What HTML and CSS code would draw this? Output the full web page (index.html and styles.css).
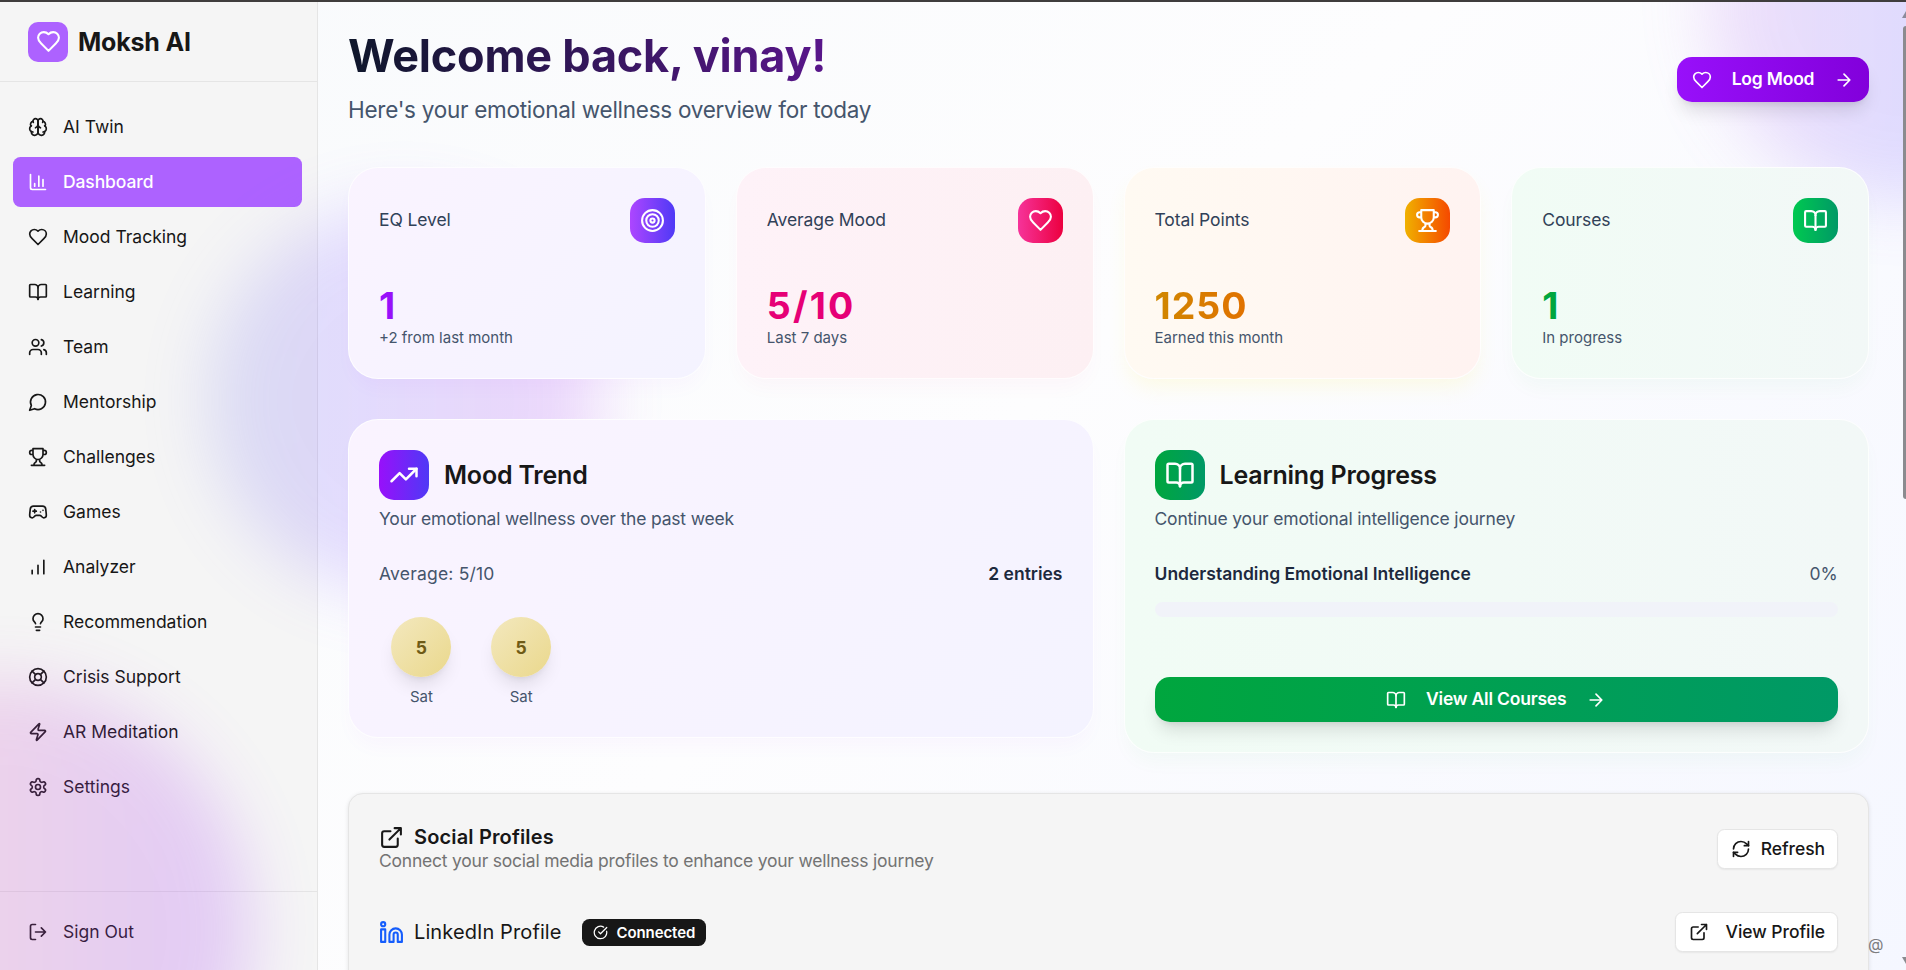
FILE: index.html
```html
<!DOCTYPE html>
<html lang="en">
<head>
  <meta charset="UTF-8" />
  <meta name="viewport" content="width=device-width, initial-scale=1.0"/>
  <title>Moksh AI</title>
  <link rel="stylesheet" href="styles.css">
</head>
<body>
  <!-- icon set -->
  <svg class="sprite" xmlns="http://www.w3.org/2000/svg">
    <symbol id="heart" viewBox="0 0 24 24"><path d="M19 14c1.49-1.46 3-3.21 3-5.5A5.5 5.5 0 0 0 16.5 3c-1.76 0-3 .5-4.5 2-1.5-1.5-2.74-2-4.5-2A5.5 5.5 0 0 0 2 8.5c0 2.3 1.5 4.05 3 5.5l7 7Z"/></symbol>
    <symbol id="brain" viewBox="0 0 24 24"><path d="M12 5a3 3 0 1 0-5.997.125 4 4 0 0 0-2.526 5.77 4 4 0 0 0 .556 6.588A4 4 0 1 0 12 18Z"/><path d="M12 5a3 3 0 1 1 5.997.125 4 4 0 0 1 2.526 5.77 4 4 0 0 1-.556 6.588A4 4 0 1 1 12 18Z"/><path d="M15 13a4.5 4.5 0 0 1-3-4 4.5 4.5 0 0 1-3 4"/><path d="M17.599 6.5a3 3 0 0 0 .399-1.375M6.003 5.125A3 3 0 0 0 6.401 6.5M3.477 10.896a4 4 0 0 1 .585-.396M19.938 10.5a4 4 0 0 1 .585.396M6 18a4 4 0 0 1-1.967-.516M19.967 17.484A4 4 0 0 1 18 18"/></symbol>
    <symbol id="chart" viewBox="0 0 24 24"><path d="M3 3v16a2 2 0 0 0 2 2h16M18 17V9M13 17V5M8 17v-3"/></symbol>
    <symbol id="book" viewBox="0 0 24 24"><path d="M12 7v14"/><path d="M3 18a1 1 0 0 1-1-1V4a1 1 0 0 1 1-1h5a4 4 0 0 1 4 4 4 4 0 0 1 4-4h5a1 1 0 0 1 1 1v13a1 1 0 0 1-1 1h-6a3 3 0 0 0-3 3 3 3 0 0 0-3-3z"/></symbol>
    <symbol id="users" viewBox="0 0 24 24"><path d="M16 21v-2a4 4 0 0 0-4-4H6a4 4 0 0 0-4 4v2M22 21v-2a4 4 0 0 0-3-3.87M16 3.13a4 4 0 0 1 0 7.75"/><circle cx="9" cy="7" r="4"/></symbol>
    <symbol id="message" viewBox="0 0 24 24"><path d="M7.9 20A9 9 0 1 0 4 16.1L2 22Z"/></symbol>
    <symbol id="trophy" viewBox="0 0 24 24"><path d="M6 9H4.5a2.5 2.5 0 0 1 0-5H6M18 9h1.5a2.5 2.5 0 0 0 0-5H18M4 22h16M10 14.66V17c0 .55-.47.98-.97 1.21C7.85 18.75 7 20.24 7 22M14 14.66V17c0 .55.47.98.97 1.21C16.15 18.75 17 20.24 17 22M18 2H6v7a6 6 0 0 0 12 0V2Z"/></symbol>
    <symbol id="gamepad" viewBox="0 0 24 24"><path d="M6 11h4M8 9v4M15 12h.01M18 10h.01"/><path d="M17.32 5H6.68a4 4 0 0 0-3.978 3.59c-.006.052-.01.101-.017.152C2.604 9.416 2 14.456 2 16a3 3 0 0 0 3 3c1 0 1.5-.5 2-1l1.414-1.414A2 2 0 0 1 9.828 16h4.344a2 2 0 0 1 1.414.586L17 18c.5.5 1 1 2 1a3 3 0 0 0 3-3c0-1.545-.604-6.584-.685-7.258-.007-.05-.011-.1-.017-.151A4 4 0 0 0 17.32 5z"/></symbol>
    <symbol id="bars" viewBox="0 0 24 24"><path d="M12 20V10M19 20V4M5 20v-4"/></symbol>
    <symbol id="bulb" viewBox="0 0 24 24"><path d="M15 14c.2-1 .7-1.7 1.5-2.5 1-.9 1.5-2.2 1.5-3.5A6 6 0 0 0 6 8c0 1 .2 2.2 1.5 3.5.7.7 1.3 1.5 1.5 2.5M9 18h6M10 22h4"/></symbol>
    <symbol id="buoy" viewBox="0 0 24 24"><circle cx="12" cy="12" r="10"/><path d="m4.93 4.93 4.24 4.24M14.83 9.17l4.24-4.24M14.83 14.83l4.24 4.24M9.17 14.83l-4.24 4.24"/><circle cx="12" cy="12" r="4"/></symbol>
    <symbol id="zap" viewBox="0 0 24 24"><path d="M4 14a1 1 0 0 1-.78-1.63l9.9-10.2a.5.5 0 0 1 .86.46l-1.92 6.02A1 1 0 0 0 13 10h7a1 1 0 0 1 .78 1.63l-9.9 10.2a.5.5 0 0 1-.86-.46l1.92-6.02A1 1 0 0 0 11 14z"/></symbol>
    <symbol id="gear" viewBox="0 0 24 24"><path d="M12.22 2h-.44a2 2 0 0 0-2 2v.18a2 2 0 0 1-1 1.73l-.43.25a2 2 0 0 1-2 0l-.15-.08a2 2 0 0 0-2.73.73l-.22.38a2 2 0 0 0 .73 2.73l.15.1a2 2 0 0 1 1 1.72v.51a2 2 0 0 1-1 1.74l-.15.09a2 2 0 0 0-.73 2.73l.22.38a2 2 0 0 0 2.73.73l.15-.08a2 2 0 0 1 2 0l.43.25a2 2 0 0 1 1 1.73V20a2 2 0 0 0 2 2h.44a2 2 0 0 0 2-2v-.18a2 2 0 0 1 1-1.73l.43-.25a2 2 0 0 1 2 0l.15.08a2 2 0 0 0 2.73-.73l.22-.39a2 2 0 0 0-.73-2.73l-.15-.08a2 2 0 0 1-1-1.74v-.5a2 2 0 0 1 1-1.74l.15-.09a2 2 0 0 0 .73-2.73l-.22-.38a2 2 0 0 0-2.73-.73l-.15.08a2 2 0 0 1-2 0l-.43-.25a2 2 0 0 1-1-1.73V4a2 2 0 0 0-2-2z"/><circle cx="12" cy="12" r="3"/></symbol>
    <symbol id="logout" viewBox="0 0 24 24"><path d="m16 17 5-5-5-5M21 12H9M9 21H5a2 2 0 0 1-2-2V5a2 2 0 0 1 2-2h4"/></symbol>
    <symbol id="arrow" viewBox="0 0 24 24"><path d="M5 12h14M12 5l7 7-7 7"/></symbol>
    <symbol id="target" viewBox="0 0 24 24"><circle cx="12" cy="12" r="10"/><circle cx="12" cy="12" r="6"/><circle cx="12" cy="12" r="2"/></symbol>
    <symbol id="trend" viewBox="0 0 24 24"><path d="M16 7h6v6"/><path d="m22 7-8.500 8.500-5-5L2 17"/></symbol>
    <symbol id="external" viewBox="0 0 24 24"><path d="M15 3h6v6M10 14 21 3M18 13v6a2 2 0 0 1-2 2H5a2 2 0 0 1-2-2V8a2 2 0 0 1 2-2h6"/></symbol>
    <symbol id="refresh" viewBox="0 0 24 24"><path d="M3 12a9 9 0 0 1 9-9 9.750 9.750 0 0 1 6.740 2.740L21 8"/><path d="M21 3v5h-5M21 12a9 9 0 0 1-9 9 9.750 9.750 0 0 1-6.740-2.740L3 16"/><path d="M8 16H3v5"/></symbol>
    <symbol id="linkedin" viewBox="0 0 24 24"><path d="M16 8a6 6 0 0 1 6 6v7h-4v-7a2 2 0 0 0-4 0v7h-4v-7a6 6 0 0 1 6-6z"/><rect width="4" height="12" x="2" y="9"/><circle cx="4" cy="4" r="2"/></symbol>
    <symbol id="check" viewBox="0 0 24 24"><path d="M21.801 10A10 10 0 1 1 17 3.335"/><path d="m9 11 3 3L22 4"/></symbol>
  </svg>

  <aside class="sidebar">
    <div class="brand">
      <div class="brand-logo"><svg class="icon lg"><use href="#heart"/></svg></div>
      <span class="brand-name">Moksh AI</span>
    </div>
    <nav class="nav">
      <a class="nav-item"><svg class="icon"><use href="#brain"/></svg><span>AI Twin</span></a>
      <a class="nav-item active"><svg class="icon"><use href="#chart"/></svg><span>Dashboard</span></a>
      <a class="nav-item"><svg class="icon"><use href="#heart"/></svg><span>Mood Tracking</span></a>
      <a class="nav-item"><svg class="icon"><use href="#book"/></svg><span>Learning</span></a>
      <a class="nav-item"><svg class="icon"><use href="#users"/></svg><span>Team</span></a>
      <a class="nav-item"><svg class="icon"><use href="#message"/></svg><span>Mentorship</span></a>
      <a class="nav-item"><svg class="icon"><use href="#trophy"/></svg><span>Challenges</span></a>
      <a class="nav-item"><svg class="icon"><use href="#gamepad"/></svg><span>Games</span></a>
      <a class="nav-item"><svg class="icon"><use href="#bars"/></svg><span>Analyzer</span></a>
      <a class="nav-item"><svg class="icon"><use href="#bulb"/></svg><span>Recommendation</span></a>
      <a class="nav-item"><svg class="icon"><use href="#buoy"/></svg><span>Crisis Support</span></a>
      <a class="nav-item"><svg class="icon"><use href="#zap"/></svg><span>AR Meditation</span></a>
      <a class="nav-item"><svg class="icon"><use href="#gear"/></svg><span>Settings</span></a>
    </nav>
    <div class="sidebar-footer">
      <a class="nav-item"><svg class="icon"><use href="#logout"/></svg><span>Sign Out</span></a>
    </div>
  </aside>

  <div class="blobs">
    <div class="blob blob-top"></div>
    <div class="blob blob-mid"></div>
    <div class="blob blob-bottom"></div>
  </div>

  <main class="main">
    <header class="welcome">
      <div>
        <h1><span>Welcome back, vinay!</span></h1>
        <p>Here's your emotional wellness overview for today</p>
      </div>
      <button class="btn btn-purple"><svg class="icon"><use href="#heart"/></svg><span>Log Mood</span><svg class="icon"><use href="#arrow"/></svg></button>
    </header>

    <section class="stats">
      <div class="card stat purple">
        <div class="stat-top"><span class="label">EQ Level</span><div class="tile"><svg class="icon lg"><use href="#target"/></svg></div></div>
        <div><span class="value">1</span></div>
        <div class="note">+2 from last month</div>
      </div>
      <div class="card stat pink">
        <div class="stat-top"><span class="label">Average Mood</span><div class="tile"><svg class="icon lg"><use href="#heart"/></svg></div></div>
        <div><span class="value">5/10</span></div>
        <div class="note">Last 7 days</div>
      </div>
      <div class="card stat orange">
        <div class="stat-top"><span class="label">Total Points</span><div class="tile"><svg class="icon lg"><use href="#trophy"/></svg></div></div>
        <div><span class="value">1250</span></div>
        <div class="note">Earned this month</div>
      </div>
      <div class="card stat green">
        <div class="stat-top"><span class="label">Courses</span><div class="tile"><svg class="icon lg"><use href="#book"/></svg></div></div>
        <div><span class="value">1</span></div>
        <div class="note">In progress</div>
      </div>
    </section>

    <section class="panels">
      <div class="card panel purple">
        <div class="panel-title"><div class="tile big"><svg class="icon xl"><use href="#trend"/></svg></div><h2>Mood Trend</h2></div>
        <p class="panel-desc">Your emotional wellness over the past week</p>
        <div class="row"><span class="muted">Average: 5/10</span><span class="strong">2 entries</span></div>
        <div class="week">
          <div class="day"><div class="score">5</div><span class="day-name">Sat</span></div>
          <div class="day"><div class="score">5</div><span class="day-name">Sat</span></div>
        </div>
      </div>
      <div class="card panel green">
        <div class="panel-title"><div class="tile big"><svg class="icon xl"><use href="#book"/></svg></div><h2>Learning Progress</h2></div>
        <p class="panel-desc">Continue your emotional intelligence journey</p>
        <div class="row"><span class="strong">Understanding Emotional Intelligence</span><span class="muted">0%</span></div>
        <div class="progress"></div>
        <button class="btn btn-green"><svg class="icon"><use href="#book"/></svg><span>View All Courses</span><svg class="icon"><use href="#arrow"/></svg></button>
      </div>
    </section>

    <section class="social">
      <div class="social-row">
        <div>
          <h3><svg class="icon lg"><use href="#external"/></svg>Social Profiles</h3>
          <p class="social-desc">Connect your social media profiles to enhance your wellness journey</p>
        </div>
        <button class="btn-outline"><svg class="icon"><use href="#refresh"/></svg><span>Refresh</span></button>
      </div>
      <div class="social-row profile">
        <div class="profile-name">
          <svg class="icon lg linkedin"><use href="#linkedin"/></svg>
          <span>LinkedIn Profile</span>
          <span class="badge"><svg class="icon sm"><use href="#check"/></svg>Connected</span>
        </div>
        <button class="btn-outline wide"><svg class="icon"><use href="#external"/></svg><span>View Profile</span></button>
      </div>
    </section>
  </main>

  <div class="scrollbar">
    <div class="scroll-up"></div>
    <div class="scroll-thumb"></div>
    <div class="scroll-down"></div>
  </div>
  <div class="at-mark">@</div>
  <div class="topline"></div>
</body>
</html>
```

FILE: styles.css
```css
* {
  box-sizing: border-box;
}
body {
  margin: 0;
  height: 970px;
  overflow: hidden;
  position: relative;
  display: flex;
  font-family: Inter, "Liberation Sans", sans-serif;
  font-size: 17.5px;
  color: #171717;
  background: linear-gradient(135deg, #f8fafc 0%, #fdfdfe 50%, #f5f7ff 100%);
}
h1, h2, h3, p { margin: 0; }
.sprite { position: absolute; width: 0; height: 0; }
.icon {
  width: 20px;
  height: 20px;
  flex: none;
  fill: none;
  stroke: currentColor;
  stroke-width: 2;
  stroke-linecap: round;
  stroke-linejoin: round;
}
.icon.sm { width: 15px; height: 15px; }
.icon.lg { width: 25px; height: 25px; }
.icon.xl { width: 30px; height: 30px; }
.topline {
  position: absolute;
  top: 0;
  left: 0;
  right: 0;
  height: 2px;
  background: #3f3d3d;
}

/* sidebar */
.sidebar {
  width: 318px;
  height: 970px;
  flex: none;
  display: flex;
  flex-direction: column;
  padding-top: 2px;
  background: #f5f5f5;
  border-right: 1px solid #e5e5e5;
}
.brand {
  height: 80px;
  padding: 0 28px;
  display: flex;
  align-items: center;
  gap: 10px;
  border-bottom: 1px solid #e5e5e5;
}
.brand-logo {
  width: 40px;
  height: 40px;
  border-radius: 10px;
  display: flex;
  align-items: center;
  justify-content: center;
  color: #fff;
  background: #ad62ff;
}
.brand-name {
  font-size: 25px;
  font-weight: 700;
  letter-spacing: -0.2px;
}
.nav {
  flex: 1;
  display: flex;
  flex-direction: column;
  gap: 5px;
  padding: 20px 15px 0 13px;
}
.nav-item {
  height: 50px;
  flex: none;
  display: flex;
  align-items: center;
  gap: 15px;
  padding: 0 15px;
  border-radius: 7.5px;
}
.nav-item span { padding-bottom: 2px; }
.nav-item.active {
  color: #fff;
  background: #ad62ff;
  font-weight: 500;
  letter-spacing: -0.1px;
}
.sidebar-footer {
  height: 79px;
  padding: 15px 15px 0 13px;
  border-top: 1px solid #e5e5e5;
}

/* glowing background shapes */
.blobs {
  position: absolute;
  inset: 0;
  overflow: hidden;
}
.blob {
  position: absolute;
  border-radius: 50%;
  opacity: 0.2;
  filter: blur(34px);
}
.blob-top {
  width: 400px;
  height: 400px;
  top: -198px;
  right: -200px;
  background: linear-gradient(90deg, #c070e8, #7860ff 50%, #5a4bff);
}
.blob-mid {
  width: 390px;
  height: 390px;
  top: 205px;
  left: 208px;
  background: linear-gradient(90deg, #6a74ea, #8460ff 35%, #b040f0);
}
.blob-bottom {
  width: 500px;
  height: 500px;
  top: 680px;
  left: -250px;
  background: linear-gradient(90deg, #f05aa8, #c84bc8 50%, #9020fa);
}

/* main column */
.main {
  position: relative;
  flex: 1;
  height: 970px;
  overflow: hidden;
  padding: 2px 37px 0 30px;
}
.welcome {
  height: 165px;
  display: flex;
  justify-content: space-between;
  padding-top: 26px;
}
h1 {
  font-size: 45px;
  line-height: 56px;
  font-weight: 700;
  letter-spacing: -0.22px;
}
h1 span {
  color: transparent;
  background: linear-gradient(90deg, #0f172b, #59168b);
  background-clip: text;
  -webkit-background-clip: text;
}
.welcome p {
  margin-top: 10px;
  font-size: 22.5px;
  line-height: 32px;
  letter-spacing: -0.27px;
  color: #45556c;
}
.btn {
  height: 45px;
  border: none;
  border-radius: 15px;
  display: flex;
  align-items: center;
  justify-content: center;
  font: inherit;
  font-weight: 600;
  letter-spacing: -0.2px;
  color: #fff;
  box-shadow: 0 12px 18px -4px rgba(0, 0, 0, 0.12), 0 5px 7px -5px rgba(0, 0, 0, 0.12);
}
.btn span { padding-bottom: 2px; }
.btn-purple {
  width: 192px;
  margin-top: 29px;
  gap: 20px;
  background: linear-gradient(90deg, #9810fa, #8200db);
}
.btn-green {
  width: 100%;
  gap: 20px;
  background: linear-gradient(90deg, #00a63e, #009966);
}
.card {
  border: 1px solid rgba(255, 255, 255, 0.8);
  border-radius: 30px;
}
.purple { background: linear-gradient(135deg, #faf3ff, #f4f3ff); box-shadow: 0 12px 20px -4px rgba(152, 16, 250, 0.03); }
.pink { background: linear-gradient(90deg, #fef2f8, #fdf0f3); box-shadow: 0 12px 20px -4px rgba(230, 0, 118, 0.03); }
.orange { background: linear-gradient(90deg, #fffaf2, #fff3f1); box-shadow: 0 12px 20px -4px rgba(254, 240, 60, 0.13); }
.green { background: linear-gradient(90deg, #f1fcf5, #f2f8f7); box-shadow: 0 12px 20px -4px rgba(0, 166, 62, 0.04); }
.tile {
  width: 45px;
  height: 45px;
  border-radius: 15px;
  display: flex;
  align-items: center;
  justify-content: center;
  color: #fff;
}
.tile.big { width: 50px; height: 50px; }
.purple .tile { background: linear-gradient(90deg, #ad46ff, #4f39f6); }
.purple .tile.big { background: linear-gradient(90deg, #9810fa, #4f39f6); }
.pink .tile { background: linear-gradient(90deg, #f6339a, #ec003f); }
.orange .tile { background: linear-gradient(90deg, #f0b100, #f54900); }
.green .tile { background: linear-gradient(90deg, #00c950, #009966); }
.green .tile.big { background: linear-gradient(90deg, #00a63e, #009966); }

/* stat cards */
.stats {
  display: grid;
  grid-template-columns: repeat(4, 1fr);
  gap: 30px;
}
.stat {
  height: 212px;
  padding: 30px;
}
.stat-top {
  display: flex;
  align-items: center;
  justify-content: space-between;
  margin-bottom: 40px;
}
.label {
  padding-bottom: 2px;
  letter-spacing: -0.1px;
  color: #314158;
}
.value {
  font-size: 37.5px;
  line-height: 45px;
  font-weight: 700;
  letter-spacing: 1px;
}
.note {
  font-size: 15px;
  line-height: 20px;
  color: #45556c;
}
.purple .value { color: #9810fa; }
.pink .value { color: #e60076; letter-spacing: 2.2px; }
.orange .value {
  color: transparent;
  background: linear-gradient(90deg, #d08700, #e17100);
  background-clip: text;
  -webkit-background-clip: text;
}
.green .value { color: #00a63e; }

/* panels */
.panels {
  display: grid;
  grid-template-columns: 1fr 1fr;
  align-items: start;
  gap: 30px;
  margin-top: 40px;
}
.panel { padding: 30px; }
.panel.purple { height: 319px; }
.panel.green { height: 334px; }
.panel-title {
  display: flex;
  align-items: center;
  gap: 15px;
}
h2 {
  font-size: 25px;
  line-height: 30px;
  font-weight: 600;
  letter-spacing: -0.2px;
  padding-bottom: 1px;
}
.panel-desc {
  margin-top: 6px;
  line-height: 26px;
  letter-spacing: -0.18px;
  color: #45556c;
}
.row {
  display: flex;
  justify-content: space-between;
  margin-top: 29px;
  line-height: 26px;
}
.muted { color: #45556c; letter-spacing: 0.2px; }
.strong { font-weight: 600; color: #1d293d; }
.week {
  display: grid;
  grid-template-columns: repeat(7, 1fr);
  gap: 15px;
  margin-top: 30px;
}
.day {
  display: flex;
  flex-direction: column;
  align-items: center;
  gap: 10px;
}
.day-name { font-size: 15px; line-height: 20px; color: #45556c; }
.score {
  width: 60px;
  height: 60px;
  border-radius: 50%;
  display: flex;
  align-items: center;
  justify-content: center;
  font-weight: 700;
  color: #6f5b16;
  background: linear-gradient(135deg, #f3e8be, #ead88c);
  box-shadow: 0 12px 18px -4px rgba(0, 0, 0, 0.1), 0 5px 7px -5px rgba(0, 0, 0, 0.1);
}
.progress {
  height: 15px;
  margin: 15px 0 60px;
  border-radius: 8px;
  background: #f1f3f9;
}

/* social profiles */
.social {
  height: 260px;
  margin-top: 40px;
  padding: 30px;
  border: 1px solid #e5e5e5;
  border-radius: 15px;
  background: #f5f5f5;
  box-shadow: 0 1px 4px rgba(0, 0, 0, 0.1);
}
.social-row {
  display: flex;
  align-items: center;
  justify-content: space-between;
}
h3 {
  display: flex;
  align-items: center;
  gap: 10px;
  font-size: 20px;
  line-height: 27px;
  font-weight: 600;
  letter-spacing: 0.15px;
}
.social-desc {
  margin-bottom: 4px;
  line-height: 19px;
  letter-spacing: -0.22px;
  color: #737373;
}
.btn-outline {
  height: 40px;
  display: flex;
  align-items: center;
  gap: 10px;
  padding: 0 12px 0 13px;
  border: 1px solid #e5e5e5;
  border-radius: 7.5px;
  background: #fff;
  font: inherit;
  font-weight: 500;
  letter-spacing: -0.05px;
  color: #171717;
  box-shadow: 0 1px 2px rgba(0, 0, 0, 0.06);
}
.btn-outline span { padding-bottom: 1px; }
.btn-outline.wide { gap: 17px; }
.profile { margin-top: 38px; }
.profile-name {
  display: flex;
  align-items: center;
  gap: 10px;
  font-size: 20px;
  letter-spacing: 0.1px;
}
.linkedin { color: #155dfc; }
.badge {
  height: 27px;
  margin-left: 10px;
  padding: 0 11px;
  display: flex;
  align-items: center;
  gap: 9px;
  border-radius: 7.5px;
  font-size: 15px;
  font-weight: 600;
  letter-spacing: -0.1px;
  color: #fff;
  background: #171717;
}

/* page edge */
.scrollbar {
  position: absolute;
  top: 0;
  right: 0;
  width: 7px;
  height: 970px;
  overflow: hidden;
}
.scroll-thumb {
  position: absolute;
  top: 26px;
  right: 0;
  width: 3px;
  height: 473px;
  border-radius: 4px 0 0 4px;
  background: #8b8b8f;
}
.scroll-up, .scroll-down {
  position: absolute;
  right: -4px;
  border-left: 4px solid transparent;
  border-right: 4px solid transparent;
}
.scroll-up { top: 11px; border-bottom: 7px solid #8b8b9b; }
.scroll-down { top: 957px; border-top: 7px solid #8b8b8f; }
.at-mark {
  position: absolute;
  left: 1868px;
  top: 934px;
  font-size: 16px;
  line-height: 20px;
  color: #7d7d80;
}
```
